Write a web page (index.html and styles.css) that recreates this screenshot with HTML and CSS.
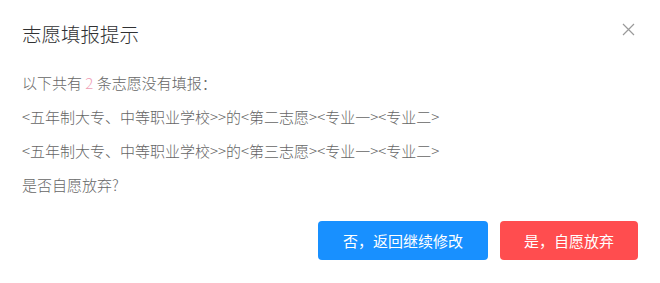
FILE: index.html
```html
<!DOCTYPE html>
<html lang="zh-CN">
<head>
<meta charset="utf-8">
<link rel="stylesheet" href="styles.css">
</head>
<body>
<div class="dialog">
  <div class="header">
    <span class="title">志愿填报提示</span>
    <span class="close" aria-label="close">
      <svg width="13" height="13" viewBox="0 0 13 13"><path d="M1 1 L12 12 M12 1 L1 12" stroke="#9a9a9a" stroke-width="1.2" fill="none"/></svg>
    </span>
  </div>
  <div class="body">
    <p>以下共有 <span class="num">2</span> 条志愿没有填报：</p>
    <p>&lt;五年制大专、中等职业学校&gt;&gt;的&lt;第二志愿&gt;&lt;专业一&gt;&lt;专业二&gt;</p>
    <p>&lt;五年制大专、中等职业学校&gt;&gt;的&lt;第三志愿&gt;&lt;专业一&gt;&lt;专业二&gt;</p>
    <p>是否自愿放弃?</p>
  </div>
  <div class="footer">
    <button class="btn btn-blue">否，返回继续修改</button>
    <button class="btn btn-red">是，自愿放弃</button>
  </div>
</div>
</body>
</html>
```
FILE: styles.css
```css
html, body {
  margin: 0;
  padding: 0;
  background: #fff;
}
body {
  font-family: "Noto Sans CJK SC", "Noto Sans", sans-serif;
}
.dialog {
  width: 660px;
  height: 283px;
  box-sizing: border-box;
  padding: 0 22px 0 22px;
}
.header {
  display: flex;
  justify-content: space-between;
  align-items: center;
  height: 34px;
  padding-top: 17px;
}
.title {
  font-size: 19.5px;
  font-weight: 300;
  color: #303133;
  line-height: 34px;
}
.close {
  display: flex;
  margin-right: 3px;
  margin-top: -10px;
}
.body {
  margin-top: 15px;
  color: #666;
  font-size: 15px;
  font-weight: 300;
}
.body p {
  margin: 0;
  line-height: 34px;
}
.num {
  color: #ef9db4;
}
.footer {
  display: flex;
  justify-content: flex-end;
  gap: 12px;
  margin-top: 19px;
}
.btn {
  border: none;
  border-radius: 4px;
  height: 39px;
  color: #fff;
  font-family: "Noto Sans CJK SC", sans-serif;
  font-size: 15px;
  padding: 0;
}
.btn-blue {
  background: #1890ff;
  width: 170px;
}
.btn-red {
  background: #ff4d4f;
  width: 138px;
}
```
